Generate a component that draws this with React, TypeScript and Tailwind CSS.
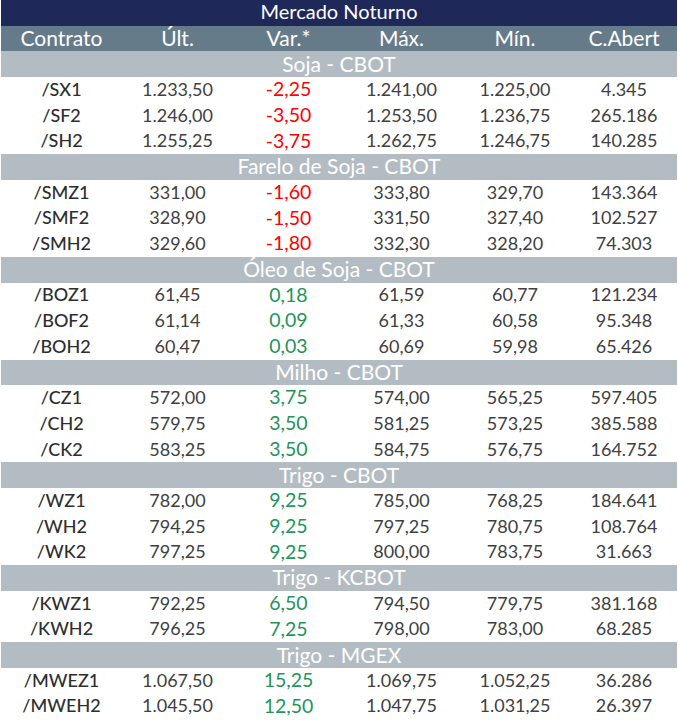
const cols = 'grid grid-cols-[121px_111px_111px_115px_112px_106px]';

type Row = [string, string, string, string, string, string];

const sections: { title: string; rows: Row[] }[] = [
  {
    title: 'Soja - CBOT',
    rows: [
      ['/SX1', '1.233,50', '-2,25', '1.241,00', '1.225,00', '4.345'],
      ['/SF2', '1.246,00', '-3,50', '1.253,50', '1.236,75', '265.186'],
      ['/SH2', '1.255,25', '-3,75', '1.262,75', '1.246,75', '140.285'],
    ],
  },
  {
    title: 'Farelo de Soja - CBOT',
    rows: [
      ['/SMZ1', '331,00', '-1,60', '333,80', '329,70', '143.364'],
      ['/SMF2', '328,90', '-1,50', '331,50', '327,40', '102.527'],
      ['/SMH2', '329,60', '-1,80', '332,30', '328,20', '74.303'],
    ],
  },
  {
    title: 'Óleo de Soja - CBOT',
    rows: [
      ['/BOZ1', '61,45', '0,18', '61,59', '60,77', '121.234'],
      ['/BOF2', '61,14', '0,09', '61,33', '60,58', '95.348'],
      ['/BOH2', '60,47', '0,03', '60,69', '59,98', '65.426'],
    ],
  },
  {
    title: 'Milho - CBOT',
    rows: [
      ['/CZ1', '572,00', '3,75', '574,00', '565,25', '597.405'],
      ['/CH2', '579,75', '3,50', '581,25', '573,25', '385.588'],
      ['/CK2', '583,25', '3,50', '584,75', '576,75', '164.752'],
    ],
  },
  {
    title: 'Trigo - CBOT',
    rows: [
      ['/WZ1', '782,00', '9,25', '785,00', '768,25', '184.641'],
      ['/WH2', '794,25', '9,25', '797,25', '780,75', '108.764'],
      ['/WK2', '797,25', '9,25', '800,00', '783,75', '31.663'],
    ],
  },
  {
    title: 'Trigo - KCBOT',
    rows: [
      ['/KWZ1', '792,25', '6,50', '794,50', '779,75', '381.168'],
      ['/KWH2', '796,25', '7,25', '798,00', '783,00', '68.285'],
    ],
  },
  {
    title: 'Trigo - MGEX',
    rows: [
      ['/MWEZ1', '1.067,50', '15,25', '1.069,75', '1.052,25', '36.286'],
      ['/MWEH2', '1.045,50', '12,50', '1.047,75', '1.031,25', '26.397'],
    ],
  },
];

const headers = ['Contrato', 'Últ.', 'Var.*', 'Máx.', 'Mín.', 'C.Abert'];

export default function App() {
  return (
    <div className="w-[678px] h-[720px] bg-white pl-[1px] font-['Lato',sans-serif]">
      <div className="w-[676px]">
        <div className="h-[25.7px] pb-[3px] bg-[#1e295a] text-white text-[20px] flex items-center justify-center leading-none">
          Mercado Noturno
        </div>
        <div className={`${cols} h-[25.7px] pb-[3px] bg-[#667b89] text-white text-[21px] items-center text-center leading-none`}>
          {headers.map((h) => (
            <div key={h}>{h}</div>
          ))}
        </div>
        {sections.map((s) => (
          <div key={s.title}>
            <div className="h-[25.7px] pb-[2px] bg-[#b4bcc3] text-white text-[21px] flex items-center justify-center leading-none">
              {s.title}
            </div>
            {s.rows.map((r) => {
              const neg = r[2].startsWith('-');
              return (
                <div key={r[0]} className={`${cols} h-[25.7px] pb-[2px] items-center text-center text-[18px] text-[#404040] leading-none`}>
                  <div className="font-medium text-[#2e2e2e]">{r[0]}</div>
                  <div>{r[1]}</div>
                  <div className={neg ? 'text-[#ff0000] text-[19.5px]' : 'text-[#23945a] text-[19.5px]'}>{r[2]}</div>
                  <div>{r[3]}</div>
                  <div>{r[4]}</div>
                  <div>{r[5]}</div>
                </div>
              );
            })}
          </div>
        ))}
      </div>
    </div>
  );
}
